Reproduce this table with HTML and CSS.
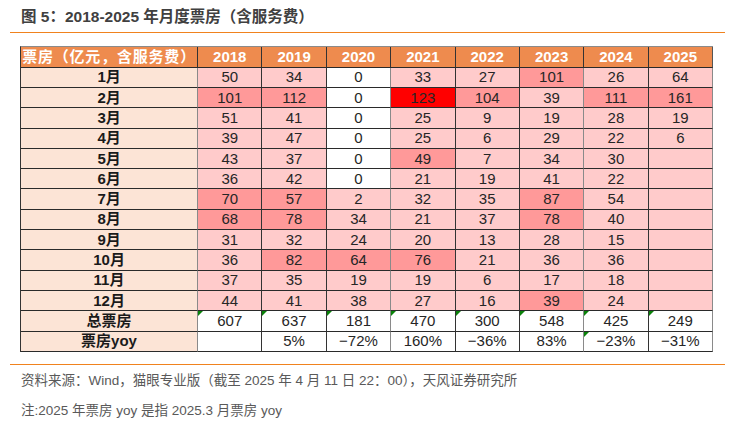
FILE: index.html
```html
<!DOCTYPE html>
<html lang="zh-CN">
<head>
<meta charset="utf-8">
<title>图 5：2018-2025 年月度票房（含服务费）</title>
<link rel="stylesheet" href="styles.css">
</head>
<body>
<div class="figure">
  <div class="fig-title">图 5：2018-2025 年月度票房（含服务费）</div>
  <table class="box-table">
    <colgroup>
      <col class="c-label"><col class="c-year"><col class="c-year"><col class="c-year"><col class="c-year"><col class="c-year"><col class="c-year"><col class="c-year"><col class="c-year">
    </colgroup>
    <thead>
      <tr><th class="label">票房（亿元，含服务费）</th><th>2018</th><th>2019</th><th>2020</th><th>2021</th><th>2022</th><th>2023</th><th>2024</th><th>2025</th></tr>
    </thead>
    <tbody>
      <tr><th>1月</th><td class="lt">50</td><td class="lt">34</td><td class="wh">0</td><td class="lt">33</td><td class="lt">27</td><td class="md">101</td><td class="lt">26</td><td class="lt">64</td></tr>
      <tr><th>2月</th><td class="md">101</td><td class="md">112</td><td class="wh">0</td><td class="hi">123</td><td class="md">104</td><td class="lt">39</td><td class="md">111</td><td class="md">161</td></tr>
      <tr><th>3月</th><td class="lt">51</td><td class="lt">41</td><td class="wh">0</td><td class="lt">25</td><td class="lt">9</td><td class="lt">19</td><td class="lt">28</td><td class="lt">19</td></tr>
      <tr><th>4月</th><td class="lt">39</td><td class="lt">47</td><td class="wh">0</td><td class="lt">25</td><td class="lt">6</td><td class="lt">29</td><td class="lt">22</td><td class="lt">6</td></tr>
      <tr><th>5月</th><td class="lt">43</td><td class="lt">37</td><td class="wh">0</td><td class="md">49</td><td class="lt">7</td><td class="lt">34</td><td class="lt">30</td><td class="lt"></td></tr>
      <tr><th>6月</th><td class="lt">36</td><td class="lt">42</td><td class="wh">0</td><td class="lt">21</td><td class="lt">19</td><td class="lt">41</td><td class="lt">22</td><td class="lt"></td></tr>
      <tr><th>7月</th><td class="md">70</td><td class="md">57</td><td class="lt">2</td><td class="lt">32</td><td class="lt">35</td><td class="md">87</td><td class="lt">54</td><td class="lt"></td></tr>
      <tr><th>8月</th><td class="md">68</td><td class="md">78</td><td class="lt">34</td><td class="lt">21</td><td class="lt">37</td><td class="md">78</td><td class="lt">40</td><td class="lt"></td></tr>
      <tr><th>9月</th><td class="lt">31</td><td class="lt">32</td><td class="lt">24</td><td class="lt">20</td><td class="lt">13</td><td class="lt">28</td><td class="lt">15</td><td class="lt"></td></tr>
      <tr><th>10月</th><td class="lt">36</td><td class="md">82</td><td class="md">64</td><td class="md">76</td><td class="lt">21</td><td class="lt">36</td><td class="lt">36</td><td class="lt"></td></tr>
      <tr><th>11月</th><td class="lt">37</td><td class="lt">35</td><td class="lt">19</td><td class="lt">19</td><td class="lt">6</td><td class="lt">17</td><td class="lt">18</td><td class="lt"></td></tr>
      <tr><th>12月</th><td class="lt">44</td><td class="lt">41</td><td class="lt">38</td><td class="lt">27</td><td class="lt">16</td><td class="md">39</td><td class="lt">24</td><td class="lt"></td></tr>
      <tr><th>总票房</th><td class="wh flag">607</td><td class="wh flag">637</td><td class="wh flag">181</td><td class="wh flag">470</td><td class="wh flag">300</td><td class="wh flag">548</td><td class="wh flag">425</td><td class="wh flag">249</td></tr>
      <tr><th>票房yoy</th><td class="wh"></td><td class="wh">5%</td><td class="wh">−72%</td><td class="wh">160%</td><td class="wh">−36%</td><td class="wh">83%</td><td class="wh flag">−23%</td><td class="wh">−31%</td></tr>
    </tbody>
  </table>
  <div class="rule"></div>
  <p class="source">资料来源：Wind，猫眼专业版（截至 2025 年 4 月 11 日 22：00），天风证券研究所</p>
  <p class="note">注:2025 年票房 yoy 是指 2025.3 月票房 yoy</p>
</div>
</body>
</html>
```
FILE: styles.css
```css
* { box-sizing: border-box; }
html, body { margin: 0; padding: 0; background: #fff; }
body {
  font-family: "Liberation Sans", "Noto Sans CJK SC", sans-serif;
  color: #262626;
}
.figure {
  margin-left: 10px;
  width: 715px;
}
.fig-title {
  height: 33px;
  padding: 3px 0 0 11px;
  line-height: 28px;
  font-size: 15.5px;
  font-weight: bold;
  color: #404040;
  border-bottom: 1px solid #f0821e;
}
.box-table {
  margin: 13px 0 0 10px;
  width: 693px;
  table-layout: fixed;
  border-collapse: separate;
  border-spacing: 0;
  border-left: 1px solid #333;
  border-top: 1px solid #8a8a8a;
}
.c-label { width: 177px; }
.c-year { width: 64.34px; }
.box-table th,
.box-table td {
  padding: 0;
  height: 20.3px;
  text-align: center;
  vertical-align: middle;
  font-size: 15px;
  line-height: 18px;
  border-right: 1px solid #333;
  border-bottom: 1px solid #2a2a2a;
  white-space: nowrap;
}
.box-table thead th {
  height: 20.7px;
  background: #ee8b4e;
  color: #fff;
  font-weight: bold;
}
.box-table thead th.label { letter-spacing: 0.8px; }
.box-table tbody th {
  background: #fce4d6;
  color: #1a1a1a;
  font-weight: bold;
  border-right-color: #8a8a8a;
}
.box-table tbody td { color: #262626; position: relative; }
.box-table tbody td:nth-child(4),
.box-table tbody td:nth-child(7),
.box-table tbody td:nth-child(9) { border-right-color: #8a8a8a; }
.box-table thead th:last-child { border-right-color: #555; }
.lt { background: #ffcbcb; }
.md { background: #ff9999; }
.hi { background: #ff0000; }
.wh { background: #ffffff; }
.flag::before {
  content: "";
  position: absolute;
  top: 0;
  left: 0;
  border-top: 5px solid #0a820a;
  border-right: 5px solid transparent;
}
.rule {
  margin-top: 12px;
  height: 1px;
  background: #f0821e;
}
.source,
.note {
  margin: 0;
  padding-left: 11px;
  font-size: 13.5px;
  line-height: 20px;
  color: #595959;
}
.source { margin-top: 6px; }
.note { margin-top: 10px; }
```
